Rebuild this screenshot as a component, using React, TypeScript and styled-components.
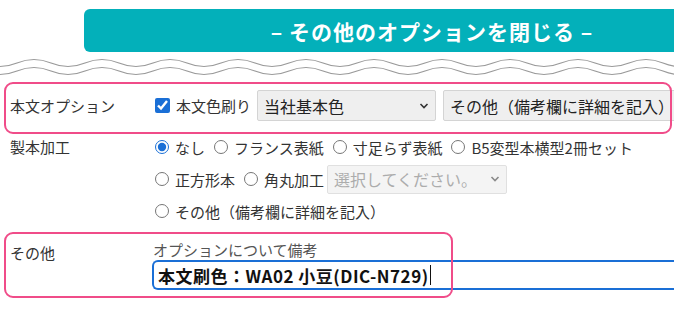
import React from "react";
import styled, { createGlobalStyle } from "styled-components";

const GlobalStyle = createGlobalStyle`
  html, body {
    margin: 0;
    padding: 0;
    background: #ffffff;
    overflow: hidden;
  }
  body {
    font-family: "Noto Sans CJK JP", "Noto Sans", sans-serif;
    color: #333333;
  }
`;

const Page = styled.div`
  position: relative;
  width: 780px;
  height: 310px;
`;

const Header = styled.div`
  padding: 9px 0 0 84px;
`;

const CloseButton = styled.button`
  display: block;
  width: 696px;
  height: 43px;
  border: none;
  border-radius: 6px;
  background: #03b0ba;
  color: #ffffff;
  font-family: inherit;
  font-size: 21px;
  font-weight: 700;
  letter-spacing: 1px;
  cursor: pointer;
`;

const WaveSvg = styled.svg`
  display: block;
  width: 780px;
  height: 28px;
`;

const Form = styled.div`
  display: flex;
  flex-direction: column;
`;

const Row = styled.div<{ pad: number }>`
  display: grid;
  grid-template-columns: 153px 1fr;
  padding-top: ${({ pad }) => pad}px;
`;

const Label = styled.div<{ lh: number; center?: boolean }>`
  padding-left: 10px;
  font-size: 15px;
  line-height: ${({ lh }) => lh}px;
  color: #333333;
  align-self: ${({ center }) => (center ? "center" : "start")};
`;

const Inline = styled.div`
  display: flex;
  align-items: center;
  height: 32px;
  font-size: 15px;
  color: #333333;
  white-space: nowrap;
`;

const Choice = styled.label`
  display: flex;
  align-items: center;
  gap: 6px;
  margin-right: 7px;
  line-height: 1;
`;

const CheckBox = styled.input`
  width: 15px;
  height: 15px;
  margin: 0 0 0 2px;
  accent-color: #1a6fd6;
`;

const Radio = styled.input`
  width: 14px;
  height: 14px;
  margin: 0 0 0 2px;
  accent-color: #1a6fd6;
`;

const SelectBox = styled.div<{ w: number; h: number; shift?: number }>`
  position: relative;
  width: ${({ w }) => w}px;
  height: ${({ h }) => h}px;
  margin-left: ${({ shift = 0 }) => shift}px;
  flex: none;
`;

const Select = styled.select`
  appearance: none;
  width: 100%;
  height: 100%;
  padding: 0 24px 0 6px;
  border: 1px solid #d4d4d4;
  border-radius: 2px;
  background: #efefef;
  color: #222222;
  font-family: inherit;
  font-size: 16px;

  &:disabled {
    color: #8a8a8a;
    background: #f0f0f0;
  }
`;

const Chevron = styled.svg<{ faded?: boolean }>`
  position: absolute;
  right: 7px;
  top: 50%;
  margin-top: -4px;
  width: 10px;
  height: 8px;
  pointer-events: none;
  color: ${({ faded }) => (faded ? "#8a8a8a" : "#333333")};
`;

const Lines = styled.div`
  display: flex;
  flex-direction: column;
`;

const Note = styled.div`
  display: flex;
  flex-direction: column;
`;

const NoteTitle = styled.div`
  font-size: 15px;
  line-height: 20px;
  color: #555555;
`;

const NoteInput = styled.div`
  display: flex;
  align-items: center;
  height: 30px;
  margin-left: -1px;
  padding-left: 4px;
  border: 2px solid #1a6fd6;
  border-right: none;
  border-radius: 6px 0 0 6px;
  box-sizing: border-box;
  font-size: 17px;
  font-weight: 700;
  letter-spacing: 0.5px;
  color: #111111;
`;

const Caret = styled.span`
  display: inline-block;
  width: 1px;
  height: 20px;
  margin-left: 1px;
  background: #111111;
`;

const Highlight = styled.div<{ x: number; y: number; w: number; h: number }>`
  position: absolute;
  left: ${({ x }) => x}px;
  top: ${({ y }) => y}px;
  width: ${({ w }) => w}px;
  height: ${({ h }) => h}px;
  box-sizing: border-box;
  border: 2.5px solid #f04c89;
  border-radius: 9px;
  pointer-events: none;
`;

const wavePath = (y: number) => {
  let d = `M -34 ${y}`;
  for (let x = -34; x < 800; x += 68) {
    d += ` c 17 0 17 7 34 7 c 17 0 17 -7 34 -7`;
  }
  return d;
};

const ChevronIcon = ({ faded }: { faded?: boolean }) => (
  <Chevron faded={faded} viewBox="0 0 10 8">
    <path d="M1.5 2 L5 5.5 L8.5 2" fill="none" stroke="currentColor" strokeWidth="1.6" />
  </Chevron>
);

export default function App() {
  return (
    <>
      <GlobalStyle />
      <Page>
        <Header>
          <CloseButton>– その他のオプションを閉じる –</CloseButton>
        </Header>
        <WaveSvg viewBox="0 0 780 28">
          <path d={wavePath(7.5)} fill="none" stroke="#9a9a9a" strokeWidth="1.2" />
          <path d={wavePath(15.5)} fill="none" stroke="#9a9a9a" strokeWidth="1.2" />
        </WaveSvg>
        <Form>
          <Row pad={10}>
            <Label lh={26} center>
              本文オプション
            </Label>
            <Inline style={{ height: 31 }}>
              <Choice>
                <CheckBox type="checkbox" defaultChecked />
                本文色刷り
              </Choice>
              <SelectBox w={179} h={31} shift={-1}>
                <Select defaultValue="basic">
                  <option value="basic">当社基本色</option>
                </Select>
                <ChevronIcon />
              </SelectBox>
              <SelectBox w={260} h={31} shift={7}>
                <Select defaultValue="other">
                  <option value="other">その他（備考欄に詳細を記入）</option>
                </Select>
              </SelectBox>
            </Inline>
          </Row>
          <Row pad={10}>
            <Label lh={32}>製本加工</Label>
            <Lines>
              <Inline>
                <Choice>
                  <Radio type="radio" name="bind" defaultChecked />
                  なし
                </Choice>
                <Choice>
                  <Radio type="radio" name="bind" />
                  フランス表紙
                </Choice>
                <Choice>
                  <Radio type="radio" name="bind" />
                  寸足らず表紙
                </Choice>
                <Choice>
                  <Radio type="radio" name="bind" />
                  B5変型本横型2冊セット
                </Choice>
              </Inline>
              <Inline>
                <Choice>
                  <Radio type="radio" name="bind" />
                  正方形本
                </Choice>
                <Choice>
                  <Radio type="radio" name="bind" />
                  角丸加工
                </Choice>
                <SelectBox w={180} h={29} shift={-4}>
                  <Select disabled defaultValue="none">
                    <option value="none">選択してください。</option>
                  </Select>
                  <ChevronIcon faded />
                </SelectBox>
              </Inline>
              <Inline>
                <Choice>
                  <Radio type="radio" name="bind" />
                  その他（備考欄に詳細を記入）
                </Choice>
              </Inline>
            </Lines>
          </Row>
          <Row pad={13}>
            <Label lh={26}>その他</Label>
            <Note>
              <NoteTitle>オプションについて備考</NoteTitle>
              <NoteInput>
                本文刷色：WA02 小豆(DIC-N729)
                <Caret />
              </NoteInput>
            </Note>
          </Row>
        </Form>
        <Highlight x={4} y={82} w={668} h={52} />
        <Highlight x={4} y={232} w={449} h={66} />
      </Page>
    </>
  );
}
